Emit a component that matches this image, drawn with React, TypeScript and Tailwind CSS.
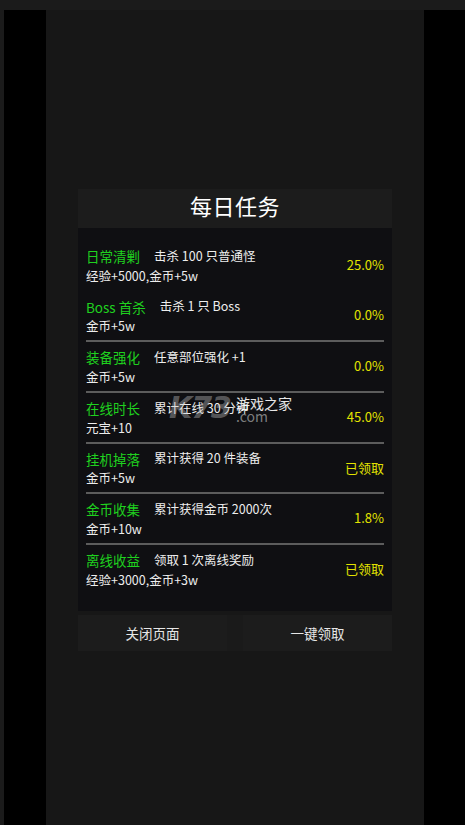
import React from "react";

type Task = {
  name: string;
  desc: string;
  reward: string;
  status: string;
  divider: boolean;
};

const tasks: Task[] = [
  { name: "日常清剿", desc: "击杀 100 只普通怪", reward: "经验+5000,金币+5w", status: "25.0%", divider: false },
  { name: "Boss 首杀", desc: "击杀 1 只 Boss", reward: "金币+5w", status: "0.0%", divider: true },
  { name: "装备强化", desc: "任意部位强化 +1", reward: "金币+5w", status: "0.0%", divider: true },
  { name: "在线时长", desc: "累计在线 30 分钟", reward: "元宝+10", status: "45.0%", divider: true },
  { name: "挂机掉落", desc: "累计获得 20 件装备", reward: "金币+5w", status: "已领取", divider: true },
  { name: "金币收集", desc: "累计获得金币 2000次", reward: "金币+10w", status: "1.8%", divider: true },
  { name: "离线收益", desc: "领取 1 次离线奖励", reward: "经验+3000,金币+3w", status: "已领取", divider: false },
];

function TaskRow({ task, last }: { task: Task; last: boolean }) {
  return (
    <div>
      <div className="h-[48.7px] flex items-center justify-between pt-[5px] pb-[3.7px]">
        <div className="flex flex-col">
          <div className="h-[20px] flex items-center">
            <span className="text-[13.5px] text-[#1fd11f]">{task.name}</span>
            <span className="ml-[14px] text-[12.5px] text-[#ededed]">{task.desc}</span>
          </div>
          <div className="h-[20px] flex items-center text-[12.5px] text-[#ededed]">{task.reward}</div>
        </div>
        <span className="text-[13px] text-[#e3e300] pb-[3px]">{task.status}</span>
      </div>
      {!last && <div className={task.divider ? "h-[2px] bg-[#5c5c5c]" : "h-[2px]"} />}
    </div>
  );
}

export default function App() {
  return (
    <div
      className="w-[465px] h-[825px] bg-[#1b1b1b] pt-[10px] flex overflow-hidden"
      style={{ fontFamily: '"Noto Sans CJK SC", "Noto Sans", sans-serif' }}
    >
      <div className="w-[4px]" />
      <div className="w-[42px] bg-black" />
      <div className="w-[378px] bg-[#171717] flex flex-col items-center pt-[179px]">
        <div className="w-[314px] relative">
          <div className="h-[39px] bg-[#1c1c1c] flex items-center justify-center pb-[6px]">
            <span className="text-[22px] text-white tracking-[0.5px]">每日任务</span>
          </div>
          <div className="bg-[#0f0f12] px-[8px] pt-[13px] pb-[17px]">
            {tasks.map((t, i) => (
              <TaskRow key={t.name} task={t} last={i === tasks.length - 1} />
            ))}
          </div>
          <div className="mt-[4px] h-[36px] flex gap-[16px] bg-[#1a1a1a]">
            <button className="flex-1 bg-[#1c1c1c] text-[13.5px] text-[#e6e6e6]">关闭页面</button>
            <button className="flex-1 bg-[#1c1c1c] text-[13.5px] text-[#e6e6e6]">一键领取</button>
          </div>

          {/* watermark */}
          <div className="absolute left-[91px] top-[204px] flex items-end pointer-events-none">
            <span
              className="text-[30px] font-bold italic leading-none text-[#c8c8c8]/40 tracking-[-1px]"
              style={{ fontFamily: '"DejaVu Sans", sans-serif' }}
            >
              K73
            </span>
            <div className="flex flex-col ml-[5px] leading-none">
              <span className="text-[14px] text-white/90">游戏之家</span>
              <span className="text-[14px] text-[#c8c8c8]/60 mt-[-1px]">.com</span>
            </div>
          </div>
        </div>
      </div>
      <div className="flex-1 bg-black" />
    </div>
  );
}
